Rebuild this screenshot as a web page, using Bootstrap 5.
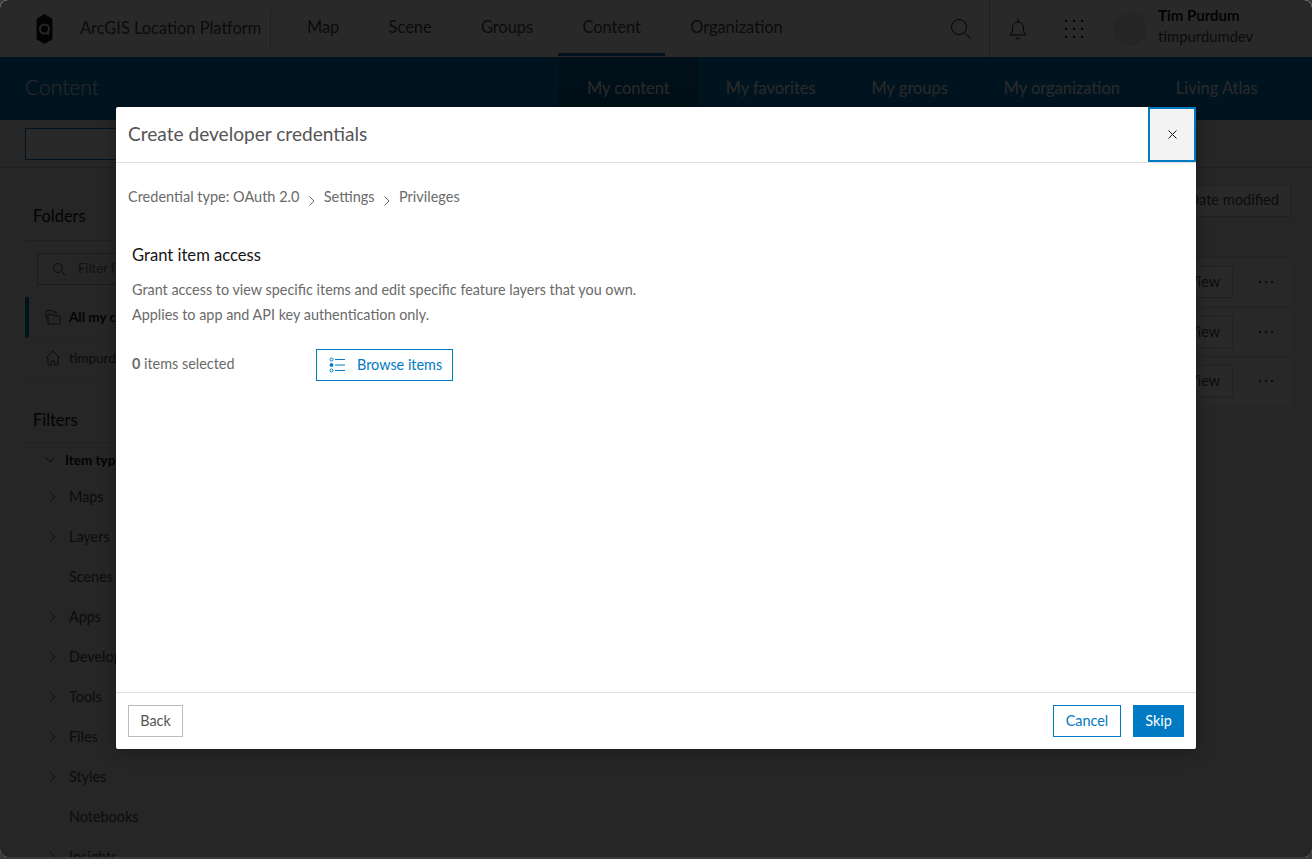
<!DOCTYPE html>
<html lang="en">
<head>
    <meta charset="UTF-8" />
    <meta name="viewport" content="width=device-width, initial-scale=1.0"/>
    <title>Create developer credentials</title>
    <link href="https://cdn.jsdelivr.net/npm/bootstrap@5.3.0/dist/css/bootstrap.min.css" rel="stylesheet"/>
    <style>
        html, body { height: 100%; background: #3a3a3a; overflow: hidden; }
        body { font-family: Lato, "Open Sans", sans-serif; font-size: 14.4px; color: #4a4a4a; }

        .app-frame { position: relative; height: 857px; overflow: hidden; border-radius: 8px; background: #ececec; }
        .app-dim { position: absolute; inset: 0; padding-bottom: 2px; background: rgba(0, 0, 0, .84); display: flex; align-items: center; justify-content: center; }

        .top-bar { height: 57px; background: #fff; padding-left: 36px; font-size: 16.4px; color: #4a4a4a; }
        .top-logo { width: 17px; height: 32px; margin-right: 27px; flex: none; }
        .top-title { width: 191px; height: 38px; line-height: 36px; border-right: 1px solid #bbb; margin-right: 36px; white-space: nowrap; }
        .top-link { color: #4a4a4a; text-decoration: none; margin-right: 49.3px; line-height: 54px; height: 57px; position: relative; }
        .top-link.on::after { content: ""; position: absolute; left: -24px; right: -24px; bottom: 1px; height: 3px; background: #007ac2; }
        .top-tools { height: 57px; }
        .top-sep { width: 1px; height: 57px; background: #bbb; margin: 0 19px 0 17px; }
        .top-icon-grid { margin-left: 37px; }
        .top-avatar { width: 34px; height: 34px; border-radius: 50%; background: #e4e4e4; margin: 0 11px 0 29px; }
        .top-name { font-size: 15px; font-weight: 700; line-height: 21px; color: #151515; }
        .top-user { font-size: 14.8px; line-height: 21px; }
        .top-who { width: 154px; margin-top: -6px; }

        .blue-bar { height: 63px; background: #007ac2; color: #fff; padding-left: 25px; font-size: 16.4px; }
        .blue-title { font-size: 21px; font-weight: 300; margin-top: -4px; }
        .blue-tab { height: 63px; line-height: 62px; padding: 0 28px; color: #fff; text-decoration: none; white-space: nowrap; }
        .blue-tab.on { background: #005e95; }
        .blue-tabs { margin-right: 26.5px; }

        .tool-row { height: 48px; padding: 8px 25px 0; border-bottom: 1px solid #ccc; }
        .tool-input { width: 180px; height: 32px; border: 1px solid #007ac2; background: #fff; }

        .side-col { width: 250px; padding: 0 0 0 25px; flex: none; }
        .side-head { font-size: 16.4px; height: 73px; padding: 34px 8px 0; line-height: 28px; border-bottom: 1px solid #ccc; color: #151515; }
        .side-filter { height: 32px; margin: 12px 0 12px 12px; border: 1px solid #aaa; padding-left: 14px; font-size: 13px; color: #6a6a6a; gap: 12px; }
        .side-row { height: 41px; padding-left: 20px; gap: 8px; font-size: 13.5px; color: #4a4a4a; border-bottom: 1px solid #ddd; }
        .side-row.on { border-left: 4px solid #007ac2; padding-left: 16px; font-weight: 700; color: #151515; }
        .side-head.side-next { height: 64px; padding-top: 27px; }
        .filter-top { height: 30px; margin: 2px 0 2px; padding-left: 20px; gap: 10px; font-size: 13.5px; font-weight: 700; color: #151515; }
        .filter-row { height: 40px; padding-left: 44px; font-size: 14.4px; color: #4a4a4a; position: relative; white-space: nowrap; }
        .filter-arrow { position: absolute; left: 25px; top: 15px; }

        .main-col { padding-right: 21px; }
        .sort-btn { height: 32px; padding: 0 11px; margin-top: 17px; border: 1px solid #ccc; line-height: 28px; width: 200px; text-align: right; font-size: 14.6px; background: #fff; color: #4a4a4a; }
        .result-list { margin-top: 40px; background: #f8f8f8; }
        .result-row { height: 49.5px; border-top: 1px solid #ccc; }
        .view-btn { width: 120px; height: 32px; line-height: 30px; border: 1px solid #ccc; background: #fff; text-align: right; padding-right: 12px; margin-right: 25px; color: #4a4a4a; }
        .row-dots { margin-right: 17px; }

        .dialog-box { width: 1080px; height: 642px; background: #fff; border: 0; border-radius: 2px; box-shadow: 0 4px 16px rgba(0, 0, 0, .25); }
        .dialog-box .modal-header { height: 56px; padding: 0 0 0 12px; border-bottom: 1px solid #dfdfdf; border-radius: 0; }
        .dialog-title { font-size: 19.1px; font-weight: 400; color: #555; line-height: 1; margin-top: -1px; }
        .dialog-close { width: 48px; height: 55px; padding: 0; border: 2px solid #007ac2; background: #f3f3f3; border-radius: 0; }
        .dialog-box .modal-body { padding: 24px 12px 0; color: #6a6a6a; }
        .step-trail { font-size: 14.5px; color: #6a6a6a; line-height: 20px; margin: 0; gap: 9.2px; }
        .step-trail svg { margin-top: 9px; }
        .grant-block { padding: 0 4px; margin-top: 38px; }
        .grant-title { font-size: 16.6px; color: #151515; font-weight: 400; line-height: 20px; margin: 0 0 12px; }
        .grant-text { line-height: 25px; margin: 0; }
        .grant-count { width: 184px; margin-top: -1px; }
        .grant-pick { margin-top: 22px; }
        .pick-btn { height: 32px; width: 137px; padding: 0 0 0 12px; gap: 12px; border: 1px solid #007ac2; color: #007ac2; border-radius: 0; font-size: 14.4px; }
        .dialog-box .modal-footer { height: 57px; padding: 0 12px; border-top: 1px solid #dfdfdf; border-radius: 0; }
        .foot-btn { height: 32px; padding: 0; font-size: 14.4px; line-height: 30px; border-radius: 0; margin: 0; }
        .foot-back { border: 1px solid #bbb; color: #555; background: #fff; width: 55px; }
        .foot-cancel { border: 1px solid #007ac2; color: #007ac2; background: #fff; width: 68px; margin-right: 12px; }
        .foot-skip { border: 1px solid #007ac2; color: #fff; background: #007ac2; width: 51px; }
    </style>
</head>
<body>
<div class="app-frame">
    <div class="top-bar d-flex align-items-center">
        <svg class="top-logo" viewBox="0 0 17 32" fill="none" stroke="#151515">
            <path d="M8.5 1.5 16 6v20l-7.5 4.500L1 26V6z" fill="#151515"/>
            <circle cx="8.5" cy="16" r="4.5" stroke="#ececec" stroke-width="2"/>
            <circle cx="12" cy="20" r="1.5" fill="#ececec" stroke="none"/>
        </svg>
        <div class="top-title">ArcGIS Location Platform</div>
        <a class="top-link" href="#">Map</a>
        <a class="top-link" href="#">Scene</a>
        <a class="top-link" href="#">Groups</a>
        <a class="top-link on" href="#">Content</a>
        <a class="top-link" href="#">Organization</a>
        <div class="top-tools d-flex align-items-center ms-auto">
            <svg width="22" height="22" viewBox="0 0 22 22" fill="none" stroke="#151515"><circle cx="9" cy="9" r="7.5"/><path d="M14.5 14.5 21 21"/></svg>
            <div class="top-sep"></div>
            <svg width="18" height="22" viewBox="0 0 18 22" fill="none" stroke="#151515"><path d="M1 17c2-2 2.5-3 2.5-7 0-3.5 2-6 5.500-6s5.500 2.5 5.500 6c0 4 .5 5 2.500 7z"/><path d="M9 1v3M7 19a2 2 0 0 0 4 0"/></svg>
            <svg class="top-icon-grid" width="20" height="20" viewBox="0 0 20 20" fill="#151515"><circle cx="2" cy="2" r="1.2"/><circle cx="10" cy="2" r="1.2"/><circle cx="18" cy="2" r="1.2"/><circle cx="2" cy="10" r="1.2"/><circle cx="10" cy="10" r="1.2"/><circle cx="18" cy="10" r="1.2"/><circle cx="2" cy="18" r="1.2"/><circle cx="10" cy="18" r="1.2"/><circle cx="18" cy="18" r="1.2"/></svg>
            <div class="top-avatar"></div>
            <div class="top-who">
                <div class="top-name">Tim Purdum</div>
                <div class="top-user">timpurdumdev</div>
            </div>
        </div>
    </div>

    <div class="blue-bar d-flex align-items-center justify-content-between">
        <div class="blue-title">Content</div>
        <div class="blue-tabs d-flex">
            <a class="blue-tab on" href="#">My content</a>
            <a class="blue-tab" href="#">My favorites</a>
            <a class="blue-tab" href="#">My groups</a>
            <a class="blue-tab" href="#">My organization</a>
            <a class="blue-tab" href="#">Living Atlas</a>
        </div>
    </div>

    <div class="tool-row"><div class="tool-input"></div></div>

    <div class="d-flex">
        <div class="side-col">
            <div class="side-head">Folders</div>
            <div class="side-filter d-flex align-items-center">
                <svg width="14" height="14" viewBox="0 0 14 14" fill="none" stroke="#4a4a4a"><circle cx="6" cy="6" r="4.5"/><path d="m9.5 9.5 4 4"/></svg>
                Filter folders
            </div>
            <div class="side-row on d-flex align-items-center">
                <svg width="16" height="16" viewBox="0 0 16 16" fill="none" stroke="#4a4a4a"><path d="M1 1.5h6l1 1.5h3v2M1 1.5v8h2M3 5.5h5l1 1.5h6v8H3z"/></svg>
                All my content
            </div>
            <div class="side-row d-flex align-items-center">
                <svg width="16" height="16" viewBox="0 0 16 16" fill="none" stroke="#4a4a4a"><path d="M8 1 1.5 7.5 3 8v7h3.5v-4h3v4H13V8l1.5-.5z"/></svg>
                timpurdumdev
            </div>
            <div class="side-head side-next">Filters</div>
            <div class="filter-top d-flex align-items-center">
                <svg width="10" height="6" viewBox="0 0 10 6" fill="none" stroke="#4a4a4a"><path d="m.5.5 4.5 4.5L9.5.5"/></svg>
                Item type
            </div>
            <div class="filter-row d-flex align-items-center"><svg class="filter-arrow" width="6" height="10" viewBox="0 0 6 10" fill="none" stroke="#4a4a4a"><path d="m.5.5 4.5 4.5L.5 9.5"/></svg>Maps</div>
            <div class="filter-row d-flex align-items-center"><svg class="filter-arrow" width="6" height="10" viewBox="0 0 6 10" fill="none" stroke="#4a4a4a"><path d="m.5.5 4.5 4.5L.5 9.5"/></svg>Layers</div>
            <div class="filter-row d-flex align-items-center">Scenes</div>
            <div class="filter-row d-flex align-items-center"><svg class="filter-arrow" width="6" height="10" viewBox="0 0 6 10" fill="none" stroke="#4a4a4a"><path d="m.5.5 4.5 4.5L.5 9.5"/></svg>Apps</div>
            <div class="filter-row d-flex align-items-center"><svg class="filter-arrow" width="6" height="10" viewBox="0 0 6 10" fill="none" stroke="#4a4a4a"><path d="m.5.5 4.5 4.5L.5 9.5"/></svg>Developer credentials</div>
            <div class="filter-row d-flex align-items-center"><svg class="filter-arrow" width="6" height="10" viewBox="0 0 6 10" fill="none" stroke="#4a4a4a"><path d="m.5.5 4.5 4.5L.5 9.5"/></svg>Tools</div>
            <div class="filter-row d-flex align-items-center"><svg class="filter-arrow" width="6" height="10" viewBox="0 0 6 10" fill="none" stroke="#4a4a4a"><path d="m.5.5 4.5 4.5L.5 9.5"/></svg>Files</div>
            <div class="filter-row d-flex align-items-center"><svg class="filter-arrow" width="6" height="10" viewBox="0 0 6 10" fill="none" stroke="#4a4a4a"><path d="m.5.5 4.5 4.5L.5 9.5"/></svg>Styles</div>
            <div class="filter-row d-flex align-items-center">Notebooks</div>
            <div class="filter-row d-flex align-items-center"><svg class="filter-arrow" width="6" height="10" viewBox="0 0 6 10" fill="none" stroke="#4a4a4a"><path d="m.5.5 4.5 4.5L.5 9.5"/></svg>Insights</div>
        </div>
        <div class="main-col flex-grow-1 d-flex flex-column align-items-end">
            <div class="sort-btn">Date modified</div>
            <div class="result-list w-100">
                <div class="result-row d-flex align-items-center justify-content-end"><div class="view-btn">View</div><svg class="row-dots" width="16" height="4" viewBox="0 0 16 4" fill="#4a4a4a"><circle cx="2" cy="2" r="1.2"/><circle cx="8" cy="2" r="1.2"/><circle cx="14" cy="2" r="1.2"/></svg></div>
                <div class="result-row d-flex align-items-center justify-content-end"><div class="view-btn">View</div><svg class="row-dots" width="16" height="4" viewBox="0 0 16 4" fill="#4a4a4a"><circle cx="2" cy="2" r="1.2"/><circle cx="8" cy="2" r="1.2"/><circle cx="14" cy="2" r="1.2"/></svg></div>
                <div class="result-row d-flex align-items-center justify-content-end"><div class="view-btn">View</div><svg class="row-dots" width="16" height="4" viewBox="0 0 16 4" fill="#4a4a4a"><circle cx="2" cy="2" r="1.2"/><circle cx="8" cy="2" r="1.2"/><circle cx="14" cy="2" r="1.2"/></svg></div>
            </div>
        </div>
    </div>

    <div class="app-dim">
        <div class="modal-content dialog-box">
            <div class="modal-header">
                <h1 class="dialog-title mb-0">Create developer credentials</h1>
                <button type="button" class="dialog-close d-flex align-items-center justify-content-center" aria-label="Close">
                    <svg width="9" height="9" viewBox="0 0 9 9" fill="none" stroke="#151515"><path d="m.5.5 8 8M8.5.5l-8 8"/></svg>
                </button>
            </div>
            <div class="modal-body">
                <div class="step-trail d-flex">
                    <span>Credential type: OAuth 2.0</span>
                    <svg width="6" height="10" viewBox="0 0 6 10" fill="none" stroke="#6a6a6a"><path d="m.5.5 4.5 4.5L.5 9.5"/></svg>
                    <span>Settings</span>
                    <svg width="6" height="10" viewBox="0 0 6 10" fill="none" stroke="#6a6a6a"><path d="m.5.5 4.5 4.5L.5 9.5"/></svg>
                    <span>Privileges</span>
                </div>
                <div class="grant-block">
                    <h2 class="grant-title">Grant item access</h2>
                    <p class="grant-text">Grant access to view specific items and edit specific feature layers that you own.</p>
                    <p class="grant-text">Applies to app and API key authentication only.</p>
                    <div class="grant-pick d-flex align-items-center">
                        <div class="grant-count"><b>0</b> items selected</div>
                        <button type="button" class="btn pick-btn d-flex align-items-center">
                            <svg width="16" height="16" viewBox="0 0 16 16" fill="none" stroke="#007ac2"><circle cx="2.5" cy="2.5" r="1.5"/><circle cx="2.5" cy="8" r="1.5" fill="#007ac2"/><circle cx="2.5" cy="13.5" r="1.5"/><path d="M6 2.5h10M6 8h10M6 13.5h10"/></svg>
                            <span>Browse items</span>
                        </button>
                    </div>
                </div>
            </div>
            <div class="modal-footer d-flex justify-content-between">
                <button type="button" class="btn foot-btn foot-back">Back</button>
                <div class="d-flex">
                    <button type="button" class="btn foot-btn foot-cancel">Cancel</button>
                    <button type="button" class="btn foot-btn foot-skip">Skip</button>
                </div>
            </div>
        </div>
    </div>
</div>
<script src="https://cdn.jsdelivr.net/npm/bootstrap@5.3.0/dist/js/bootstrap.bundle.min.js"></script>
</body>
</html>
